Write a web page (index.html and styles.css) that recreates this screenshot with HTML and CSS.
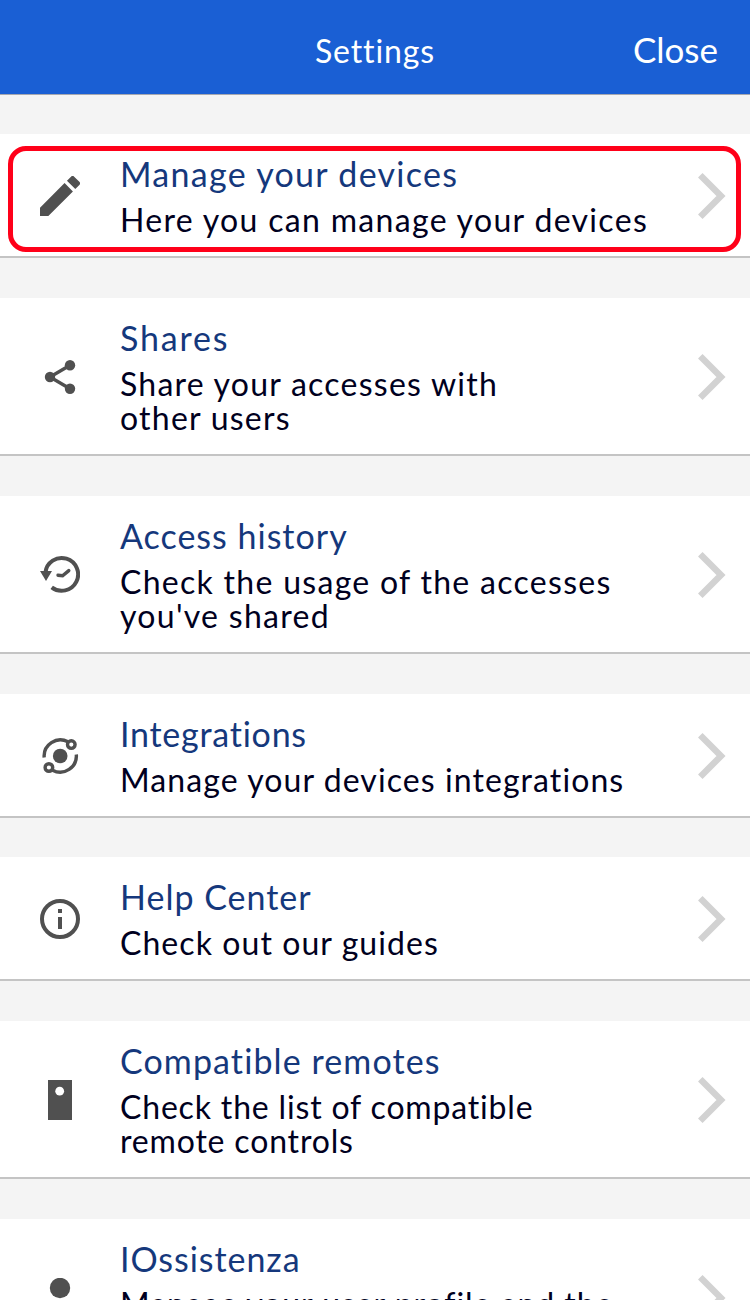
FILE: index.html
```
<!DOCTYPE html>
<html lang="en">
<head>
    <meta charset="UTF-8">
    <title>Settings</title>
    <link rel="stylesheet" href="styles.css">
</head>
<body>

<header class="topbar">
    <h1 class="topbar-title">Settings</h1>
    <a class="topbar-close">Close</a>
</header>

<main class="list">
    <section class="item item-selected devices">
        <svg class="icon" viewBox="3 3 18 18"><path d="M3 17.25V21h3.75L17.81 9.94l-3.75-3.75L3 17.25zM20.71 7.04a1 1 0 0 0 0-1.41l-2.34-2.34a1 1 0 0 0-1.41 0l-1.83 1.83 3.75 3.75 1.83-1.83z"/></svg>
        <div class="text">
            <h2 class="title">Manage your devices</h2>
            <p class="description">Here you can manage your devices</p>
        </div>
        <svg class="arrow" viewBox="0 0 28 46"><path d="M2.3 2.3L23 23L2.3 43.7"/></svg>
    </section>

    <section class="item shares">
        <svg class="icon" viewBox="0 0 40 40">
            <path class="line" d="M30 8.2L10 20L30 31.8"/>
            <circle cx="10" cy="20" r="5.2"/><circle cx="30" cy="8.2" r="5.2"/><circle cx="30" cy="31.8" r="5.2"/>
        </svg>
        <div class="text">
            <h2 class="title">Shares</h2>
            <p class="description">Share your accesses with<br>other users</p>
        </div>
        <svg class="arrow" viewBox="0 0 28 46"><path d="M2.3 2.3L23 23L2.3 43.7"/></svg>
    </section>

    <section class="item history">
        <svg class="icon" viewBox="0 0 40 40">
            <path class="line thick" d="M5.4 17.5A16.4 16.4 0 1 1 11.7 32.4"/>
            <path class="line round" d="M18 20.2L22.6 20.8L28.8 15.6"/>
            <path d="M0 16H12L6 26Z"/>
        </svg>
        <div class="text">
            <h2 class="title">Access history</h2>
            <p class="description">Check the usage of the accesses<br>you've shared</p>
        </div>
        <svg class="arrow" viewBox="0 0 28 46"><path d="M2.3 2.3L23 23L2.3 43.7"/></svg>
    </section>

    <section class="item integrations">
        <svg class="icon" viewBox="0 0 40 40">
            <circle cx="20.2" cy="20" r="7.3"/>
            <path class="line" d="M4.2 21.5A16.2 16.2 0 0 1 28 5.8M36.3 18.5A16.2 16.2 0 0 1 12.5 34.2"/>
            <circle class="line" cx="31.3" cy="8.6" r="3.8"/>
            <circle class="line" cx="8.9" cy="31.5" r="3.8"/>
        </svg>
        <div class="text">
            <h2 class="title">Integrations</h2>
            <p class="description">Manage your devices integrations</p>
        </div>
        <svg class="arrow" viewBox="0 0 28 46"><path d="M2.3 2.3L23 23L2.3 43.7"/></svg>
    </section>

    <section class="item help">
        <svg class="icon" viewBox="0 0 40 40">
            <circle class="line thick" cx="20" cy="20" r="18"/>
            <path d="M18 10h4v4h-4zM18 18h4v12h-4z"/>
        </svg>
        <div class="text">
            <h2 class="title">Help Center</h2>
            <p class="description">Check out our guides</p>
        </div>
        <svg class="arrow" viewBox="0 0 28 46"><path d="M2.3 2.3L23 23L2.3 43.7"/></svg>
    </section>

    <section class="item remotes">
        <svg class="icon" viewBox="0 0 40 40">
            <path d="M8 0H32V40H8Z"/>
            <circle class="hole" cx="19.7" cy="11.2" r="4.4"/>
        </svg>
        <div class="text">
            <h2 class="title">Compatible remotes</h2>
            <p class="description">Check the list of compatible<br>remote controls</p>
        </div>
        <svg class="arrow" viewBox="0 0 28 46"><path d="M2.3 2.3L23 23L2.3 43.7"/></svg>
    </section>

    <section class="item profile">
        <svg class="icon" viewBox="0 0 40 40">
            <circle cx="20" cy="10" r="10.2"/>
            <path d="M0 40V35C0 28 12 25 20 25S40 28 40 35V40Z"/>
        </svg>
        <div class="text">
            <h2 class="title">IOssistenza</h2>
            <p class="description">Manage your user profile and the<br>support requests</p>
        </div>
        <svg class="arrow" viewBox="0 0 28 46"><path d="M2.3 2.3L23 23L2.3 43.7"/></svg>
    </section>
</main>

</body>
</html>
```
FILE: styles.css
```
html, body {
    height: 100%;
    margin: 0;
    padding: 0;
}
body {
    font-family: Lato, 'Open Sans', sans-serif;
    background-color: #f4f4f4;
    overflow: hidden;
}
h1, h2, p {
    margin: 0;
    font-weight: 400;
}

/* header */
.topbar {
    display: grid;
    grid-template-columns: 1fr auto 1fr;
    align-items: baseline;
    box-sizing: border-box;
    height: 95px;
    padding: 26px 32px 0;
    color: #fff;
    background-color: #1a5fd4;
    border-bottom: 1px solid #a5a7b0;
}
.topbar-title {
    grid-column: 2;
    font-size: 32px;
    line-height: 46px;
    letter-spacing: 0.9px;
}
.topbar-close {
    justify-self: end;
    font-size: 35px;
    line-height: 46px;
}

/* list */
.list {
    display: flex;
    flex-direction: column;
    gap: 40px;
    padding-top: 39px;
}
.item {
    position: relative;
    display: grid;
    grid-template-columns: 40px 1fr 28px;
    column-gap: 40px;
    align-items: center;
    padding: 20px 24px 20px 40px;
    background-color: #fff;
    box-shadow: inset 0 -2px #c4c4c4;
}
/* red frame round the chosen row */
.item-selected::after {
    content: '';
    position: absolute;
    top: 12px;
    left: 8px;
    right: 9px;
    bottom: 6px;
    border: 5px solid #ff0019;
    border-radius: 18px;
}
.text {
    padding-bottom: 1px;
}
.title {
    margin-bottom: 9px;
    font-size: 34px;
    line-height: 40px;
    color: #15387c;
    white-space: nowrap;
}
.description {
    font-size: 32px;
    line-height: 34px;
    color: #000020;
    white-space: nowrap;
}

/* tracking */
.devices .title { letter-spacing: 1.3px; }
.devices .description { letter-spacing: 1.32px; }
.shares .title { letter-spacing: 1.8px; }
.shares .description { letter-spacing: 1.24px; }
.history .title { letter-spacing: 1px; }
.history .description { letter-spacing: 1.29px; }
.integrations { margin-bottom: -1px; }
.integrations .title { letter-spacing: 0.75px; }
.integrations .description { letter-spacing: 1.08px; }
.help .title { letter-spacing: 1px; }
.help .description { letter-spacing: 1.07px; }
.remotes .title { letter-spacing: 1.1px; }
.remotes .description { letter-spacing: 0.83px; }
.profile .title { letter-spacing: 0.95px; margin-bottom: 8px; }
.profile .description { letter-spacing: 0.95px; padding-bottom: 1px; }

/* icons */
.icon {
    width: 40px;
    height: 40px;
    fill: #505050;
}
.line {
    fill: none;
    stroke: #505050;
    stroke-width: 3.4;
}
.thick {
    stroke-width: 4;
}
.round {
    stroke-linecap: round;
}
.hole {
    fill: #fff;
}
.arrow {
    width: 28px;
    height: 46px;
    fill: none;
    stroke: #d2d2d2;
    stroke-width: 6.4;
}
```
